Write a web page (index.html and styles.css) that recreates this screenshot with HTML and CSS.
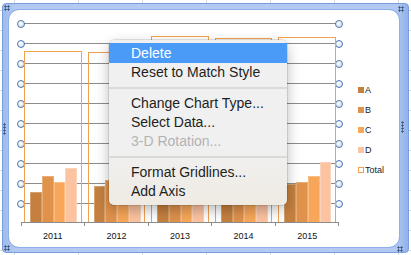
FILE: index.html
```html
<!DOCTYPE html>
<html lang="en">
<head>
    <meta charset="UTF-8">
    <meta name="viewport" content="width=device-width, initial-scale=1.0">
    <title>Chart Context Menu</title>
    <link rel="stylesheet" href="styles.css">
</head>
<body>
  <div class="sheet">
    <div class="frame">
      <span class="grip grip-corner grip-tl"></span>
      <span class="grip grip-corner grip-tr"></span>
      <span class="grip grip-corner grip-bl"></span>
      <span class="grip grip-corner grip-br"></span>
      <span class="grip grip-side grip-l"></span>
      <span class="grip grip-side grip-r"></span>

      <div class="chart">
        <div class="plot-col">
          <div class="plot">
            <div class="gridlines">
              <div class="gl"></div><div class="gl"></div><div class="gl"></div><div class="gl"></div><div class="gl"></div>
              <div class="gl"></div><div class="gl"></div><div class="gl"></div><div class="gl"></div><div class="gl"></div>
            </div>
            <div class="bars">
              <div class="cat">
                <div class="total" style="height:170px"></div>
                <div class="bar a" style="height:30px"></div>
                <div class="bar b" style="height:46px"></div>
                <div class="bar c" style="height:40px"></div>
                <div class="bar d" style="height:54px"></div>
              </div>
              <div class="cat">
                <div class="total" style="height:169px"></div>
                <div class="bar a" style="height:36px"></div>
                <div class="bar b" style="height:42px"></div>
                <div class="bar c" style="height:40px"></div>
                <div class="bar d" style="height:51px"></div>
              </div>
              <div class="cat">
                <div class="total" style="height:185px"></div>
                <div class="bar a" style="height:44px"></div>
                <div class="bar b" style="height:48px"></div>
                <div class="bar c" style="height:42px"></div>
                <div class="bar d" style="height:51px"></div>
              </div>
              <div class="cat">
                <div class="total" style="height:183px"></div>
                <div class="bar a" style="height:40px"></div>
                <div class="bar b" style="height:44px"></div>
                <div class="bar c" style="height:46px"></div>
                <div class="bar d" style="height:53px"></div>
              </div>
              <div class="cat">
                <div class="total" style="height:184px"></div>
                <div class="bar a" style="height:38px"></div>
                <div class="bar b" style="height:40px"></div>
                <div class="bar c" style="height:46px"></div>
                <div class="bar d" style="height:60px"></div>
              </div>
            </div>
          </div>
          <div class="axis">
            <span class="tick"></span><span class="tick"></span><span class="tick"></span><span class="tick"></span><span class="tick"></span>
          </div>
          <div class="labels">
            <span>2011</span><span>2012</span><span>2013</span><span>2014</span><span>2015</span>
          </div>
        </div>

        <ul class="legend">
          <li><span class="swatch a"></span>A</li>
          <li><span class="swatch b"></span>B</li>
          <li><span class="swatch c"></span>C</li>
          <li><span class="swatch d"></span>D</li>
          <li><span class="swatch total-swatch"></span>Total</li>
        </ul>
      </div>
    </div>

    <!-- Context menu -->
    <div class="menu">
      <div class="menu-item active">Delete</div>
      <div class="menu-item">Reset to Match Style</div>
      <div class="menu-sep"></div>
      <div class="menu-item">Change Chart Type...</div>
      <div class="menu-item">Select Data...</div>
      <div class="menu-item disabled">3-D Rotation...</div>
      <div class="menu-sep"></div>
      <div class="menu-item">Format Gridlines...</div>
      <div class="menu-item">Add Axis</div>
    </div>
  </div>
</body>
</html>
```

FILE: styles.css
```css
body {
  margin: 0;
  padding: 0;
  font-family: "Liberation Sans", Arial, sans-serif;
}

/* spreadsheet cells behind the chart */
.sheet {
  position: relative;
  width: 411px;
  height: 255px;
  overflow: hidden;
  background-color: #fff;
  background-image: linear-gradient(to bottom, #d8d8d8 1px, transparent 1px),
                    linear-gradient(to right, #d8d8d8 1px, transparent 1px);
  background-size: 64px 20px;
  background-position: 14px 10px;
}

/* selected chart frame */
.frame {
  position: relative;
  box-sizing: border-box;
  width: 407px;
  height: 250px;
  margin: 3px 0 0 2px;
  padding: 6px 9px 5px 6px;
  border: 1px solid #7a9edc;
  border-radius: 4px;
  background: linear-gradient(to right, #9dbbee, #b2caf2 3%, #b2caf2 97%, #8fb2ea);
}

.grip {
  position: absolute;
  background-image: radial-gradient(circle, #3e5478 0.9px, transparent 1.3px);
  background-size: 3px 3px;
}
.grip-corner { width: 6px; height: 6px; }
.grip-side { width: 3px; height: 12px; }
.grip-tl { left: 1px; top: 1px; }
.grip-tr { left: 395px; top: 2px; }
.grip-bl { left: 1px; top: 241px; }
.grip-br { left: 394px; top: 242px; }
.grip-l { left: 0; top: 119px; }
.grip-r { left: 398px; top: 117px; }

.chart {
  display: flex;
  box-sizing: border-box;
  height: 100%;
  padding: 13px 0 0 12px;
  background-color: #fff;
  border-radius: 10px;
  box-shadow: 0 0 0 1px #8eb0e8;
}

.plot-col {
  width: 318px;
}

.plot {
  position: relative;
  height: 199px;
}

.gridlines {
  position: absolute;
  left: 0;
  top: 0;
  right: 0;
  bottom: 0;
  display: flex;
  flex-direction: column;
}
.gl {
  position: relative;
  flex: 0 0 20px;
  box-sizing: border-box;
  border-top: 1px solid #8c8c8c;
}
/* selection handles at each end of a gridline */
.gl::before,
.gl::after {
  content: "";
  position: absolute;
  top: -4px;
  width: 6px;
  height: 6px;
  border: 1px solid #4d79ad;
  border-radius: 50%;
  background: radial-gradient(circle at 40% 35%, #ffffff, #c6d7ee);
}
.gl::before { left: -4px; }
.gl::after { right: -4px; }

.bars {
  position: relative;
  display: flex;
  height: 100%;
}
.cat {
  position: relative;
  flex: 1;
  display: flex;
  align-items: flex-end;
  padding-left: 9px;
}
.total {
  position: absolute;
  left: 3px;
  right: 3px;
  bottom: 0;
  border: 1px solid #f2a14f;
  border-bottom: none;
}
.bar {
  position: relative;
  flex: 0 0 11.75px;
  box-sizing: border-box;
  border: 1px solid rgba(255, 255, 255, 0.25);
  border-bottom: none;
}
.a { background-color: #c5803f; }
.b { background-color: #e0924b; }
.c { background-color: #f8a75a; }
.d { background-color: #fcc3a0; }

.axis {
  display: flex;
  height: 3px;
  border-top: 1px solid #8c8c8c;
  border-right: 1px solid #8c8c8c;
}
.tick {
  flex: 1;
  border-left: 1px solid #8c8c8c;
}

.labels {
  display: flex;
  margin-top: 5px;
  font-size: 9px;
  line-height: 11px;
  color: #111;
}
.labels span {
  flex: 1;
  text-align: center;
}

.legend {
  list-style: none;
  margin: 57px 0 0 19px;
  padding: 0;
  font-size: 9px;
  color: #1a1a1a;
}
.legend li {
  display: flex;
  align-items: center;
  height: 20px;
}
.swatch {
  width: 6px;
  height: 6px;
  margin-right: 1px;
}
.total-swatch {
  box-sizing: border-box;
  border: 1px solid #f2a14f;
  background-color: #fff;
}

/* Context menu */
.menu {
  position: absolute;
  left: 109px;
  top: 40px;
  width: 178px;
  padding: 3px 0 4px;
  border-radius: 5px;
  background: linear-gradient(#f0f0f0 65%, #efebe3);
  box-shadow: 0 0 0 0.5px rgba(0, 0, 0, 0.2), 0 5px 14px rgba(0, 0, 0, 0.28);
  font-size: 14px;
  color: #1e1e1e;
}
.menu-item {
  height: 19px;
  line-height: 19px;
  padding-left: 22px;
  white-space: nowrap;
}
.menu-item.active {
  height: 20px;
  line-height: 20px;
  background-color: #4a9bf8;
  color: #fff;
}
.menu-item.disabled {
  color: #b3b3b3;
}
.menu-sep {
  height: 2px;
  margin: 5px 0;
  background-color: #dadada;
}
```
